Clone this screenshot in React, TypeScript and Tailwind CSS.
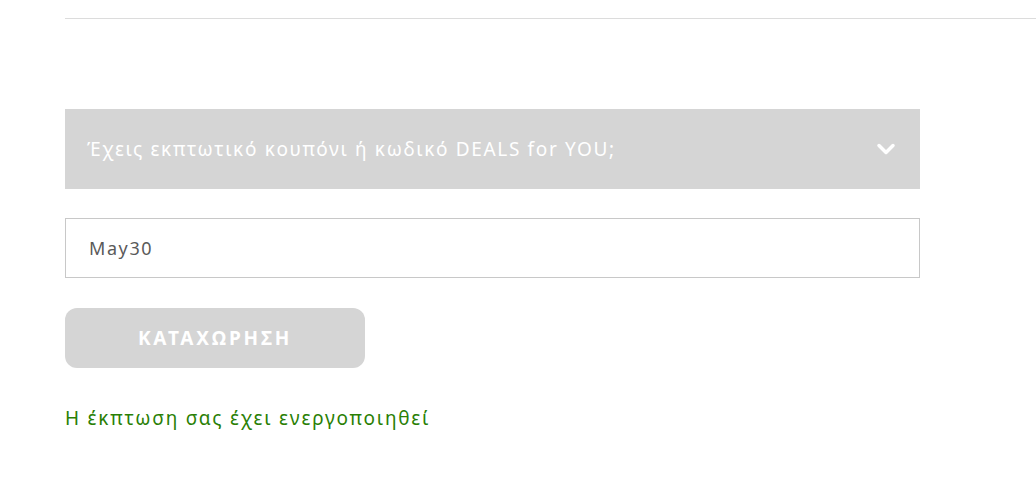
import { ChevronDown } from "lucide-react";

export default function App() {
  return (
    <div className="min-h-[490px] bg-white pl-[65px] font-['Noto_Sans',sans-serif]">
      <div className="h-[19px] border-b border-[#dcdcdc]" />

      <div className="w-[855px] pt-[90px]">
        <button
          type="button"
          className="flex h-[80px] w-full items-center justify-between bg-[#d5d5d5] pl-[22px] pr-[20px] text-left text-[19px] tracking-[1.65px] text-white"
        >
          <span>Έχεις εκπτωτικό κουπόνι ή κωδικό DEALS for YOU;</span>
          <ChevronDown className="h-[28px] w-[28px]" strokeWidth={3} />
        </button>

        <input
          type="text"
          defaultValue="May30"
          className="mt-[29px] block h-[60px] w-full border border-[#c8c8c8] px-[23px] text-[18px] tracking-[1.6px] text-[#5a5a5a] outline-none"
        />

        <button
          type="button"
          className="mt-[30px] flex h-[60px] w-[300px] items-center justify-center rounded-[12px] bg-[#d5d5d5] text-[19px] font-bold tracking-[2.8px] text-white"
        >
          ΚΑΤΑΧΩΡΗΣΗ
        </button>

        <p className="mt-[36px] text-[19px] tracking-[1.8px] text-[#2a7f05]">
          Η έκπτωση σας έχει ενεργοποιηθεί
        </p>
      </div>
    </div>
  );
}
